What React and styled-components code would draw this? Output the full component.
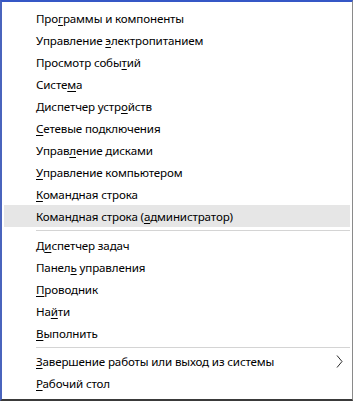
import React from "react";
import styled, { createGlobalStyle } from "styled-components";

const GlobalStyle = createGlobalStyle`
    html, body {
        margin: 0;
        padding: 0;
        background: #ffffff;
    }
    * {
        box-sizing: border-box;
    }
`;

const Cadre = styled.div`
    width: 353px;
    height: 401px;
    background: #ffffff;
    border-top: 2px solid #3557c6;
    border-left: 2px solid #4a64bd;
    border-right: 1px solid #8a8a8a;
    border-bottom: 2px solid #3a3a3a;
    padding: 5px 0 0 2px;
    display: flex;
    flex-direction: column;
    font-family: "Noto Sans", "Open Sans", sans-serif;
    font-size: 11.6px;
    letter-spacing: -0.15px;
    color: #000000;
`;

const Ligne = styled.div`
    height: 22px;
    margin-right: 2px;
    padding-left: 32px;
    padding-right: 7px;
    display: flex;
    align-items: center;
    justify-content: space-between;
    white-space: nowrap;
    background: ${(props) => (props.actif ? "#e6e6e6" : "transparent")};
`;

const Separateur = styled.div`
    height: 1px;
    margin: 3px 2px ${(props) => (props.serre ? "2px" : "3px")} 32px;
    background: #d4d4d4;
`;

const Touche = styled.span`
    text-decoration: underline;
    text-underline-offset: 2px;
`;

const Fleche = () => (
    <svg width="7" height="13" viewBox="0 0 7 13">
        <polyline
            points="1,0.5 6,6.5 1,12.5"
            fill="none"
            stroke="#2a2a2a"
            strokeWidth="1"
        />
    </svg>
);

// libelle : [avant, touche, apres]
const groupes = [
    [
        ["Про", "г", "раммы и компоненты"],
        ["Управление ", "э", "лектропитанием"],
        ["Просмотр собы", "т", "ий"],
        ["Систе", "м", "а"],
        ["Диспетчер устр", "о", "йств"],
        ["", "С", "етевые подключения"],
        ["Управ", "л", "ение дисками"],
        ["", "У", "правление компьютером"],
        ["", "К", "омандная строка"],
        ["Командная строка (", "а", "дминистратор)", true]
    ],
    [
        ["Д", "и", "спетчер задач"],
        ["Панел", "ь", " управления"],
        ["", "П", "роводник"],
        ["На", "й", "ти"],
        ["", "В", "ыполнить"]
    ],
    [
        ["", "З", "авершение работы или выход из системы", false, true],
        ["", "Р", "абочий стол"]
    ]
];

const App = () => {
    return (
        <>
            <GlobalStyle />
            <Cadre>
                {groupes.map((groupe, i) => (
                    <React.Fragment key={i}>
                        {i > 0 && <Separateur serre={i === 2} />}
                        {groupe.map(([avant, touche, apres, actif, sousMenu]) => (
                            <Ligne key={avant + touche + apres} actif={actif}>
                                <span>
                                    {avant}
                                    <Touche>{touche}</Touche>
                                    {apres}
                                </span>
                                {sousMenu && <Fleche />}
                            </Ligne>
                        ))}
                    </React.Fragment>
                ))}
            </Cadre>
        </>
    );
};

export default App;
